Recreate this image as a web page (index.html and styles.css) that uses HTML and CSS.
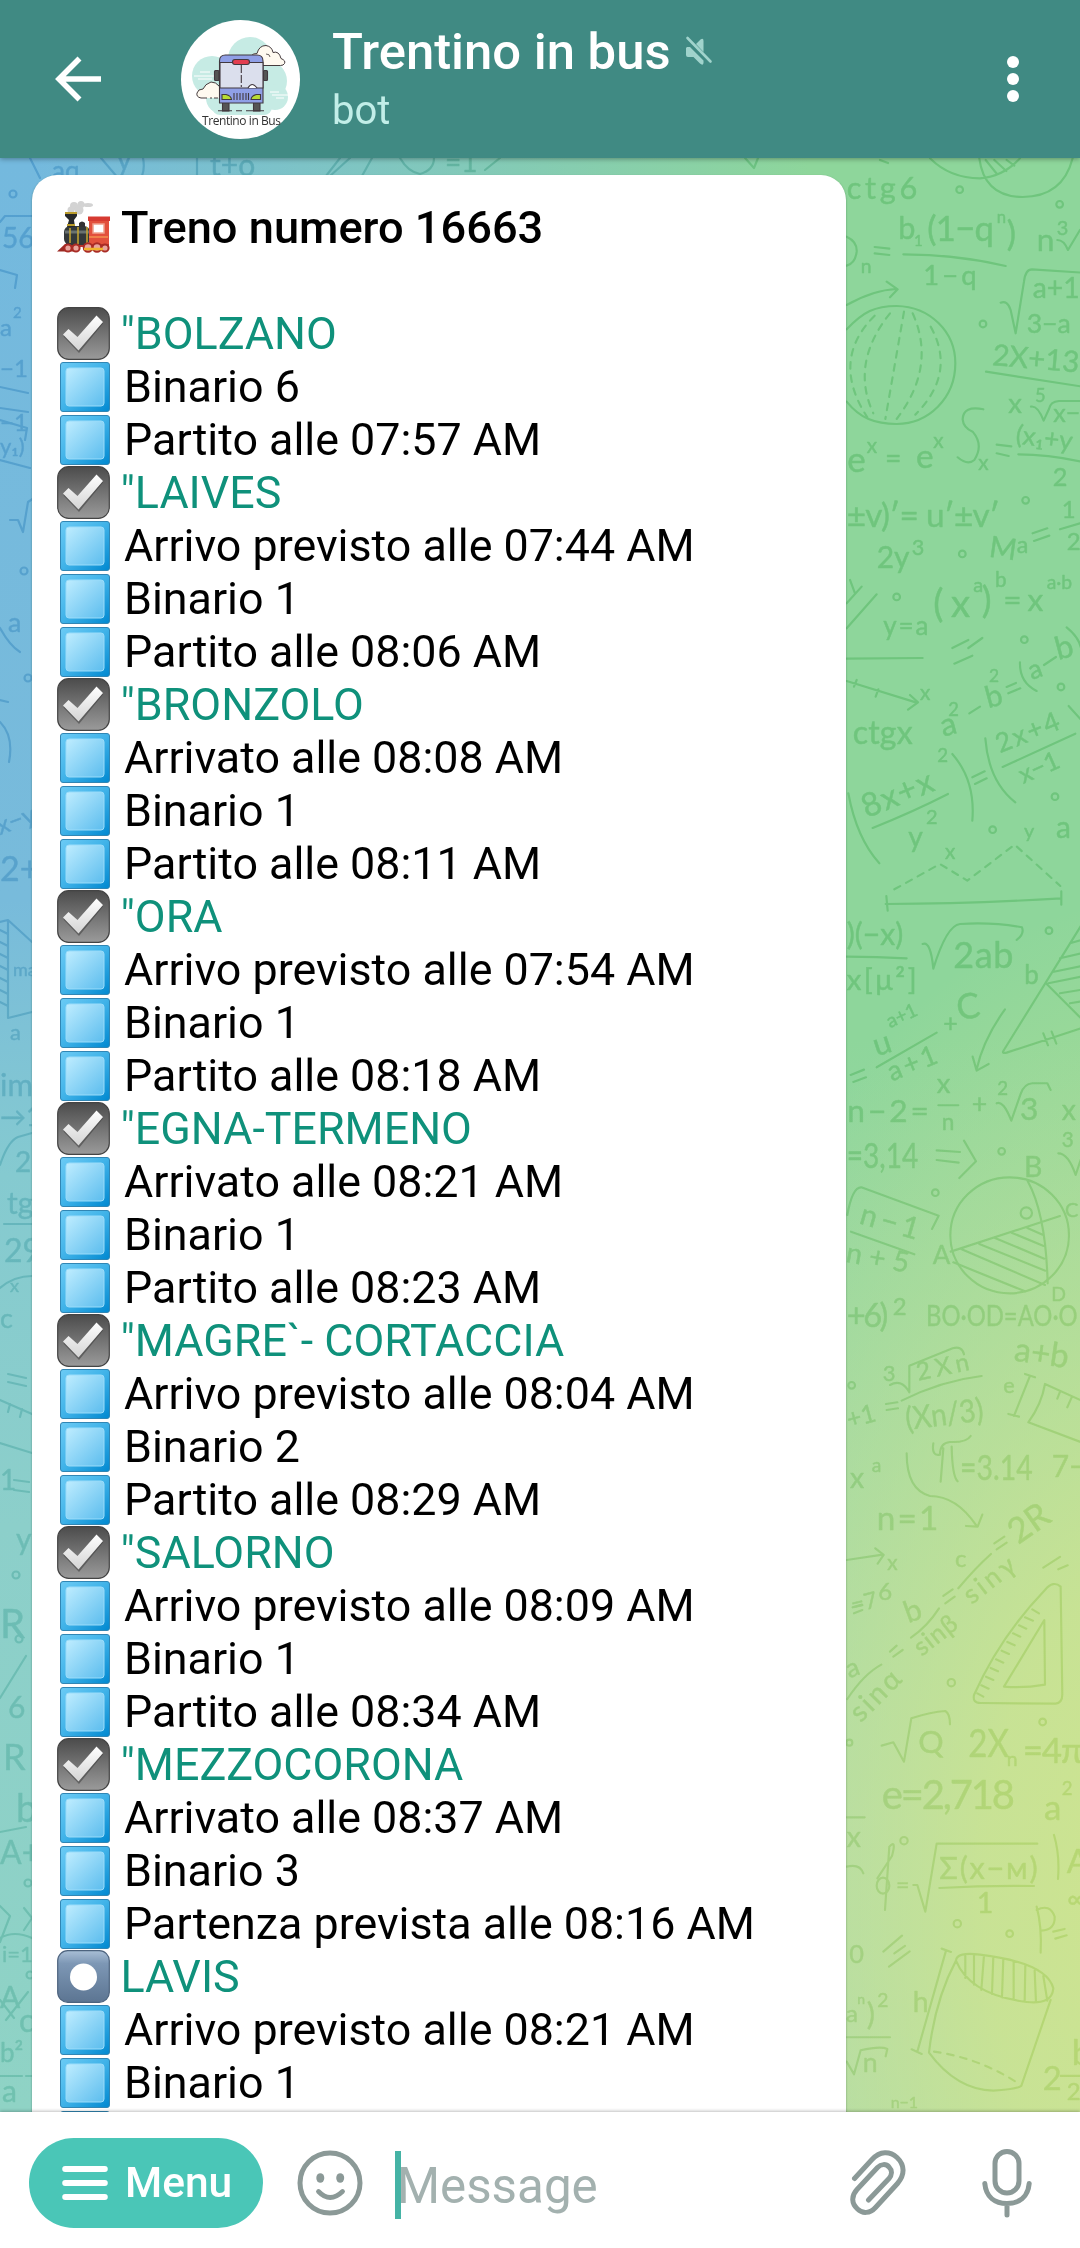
FILE: index.html
```html
<!DOCTYPE html>
<html lang="it">
<head>
<meta charset="utf-8">
<title>Trentino in bus</title>
<link rel="stylesheet" href="styles.css">
</head>
<body>
<svg class="defs" width="0" height="0" aria-hidden="true">
  <defs>
    <linearGradient id="gDark" x1="0" y1="0" x2="0" y2="1"><stop offset="0" stop-color="#4c4c4c"/><stop offset="1" stop-color="#9a9a9a"/></linearGradient>
    <linearGradient id="gTick" x1="0" y1="0" x2="0" y2="1"><stop offset="0" stop-color="#fff"/><stop offset="1" stop-color="#d4d4d4"/></linearGradient>
    <linearGradient id="gBlue" x1="0" y1="0" x2="1" y2="1"><stop offset="0" stop-color="#6ccbf5"/><stop offset=".5" stop-color="#3fb2e8"/><stop offset="1" stop-color="#0088d0"/></linearGradient>
    <linearGradient id="gLight" x1="0" y1="0" x2="1" y2="1"><stop offset="0" stop-color="#bfedff"/><stop offset="1" stop-color="#5cbdee"/></linearGradient>
    <linearGradient id="gSteel" x1="0" y1="0" x2="0" y2="1"><stop offset="0" stop-color="#a9bfd6"/><stop offset=".25" stop-color="#7d97b5"/><stop offset="1" stop-color="#5c7592"/></linearGradient>
    <symbol id="tick" viewBox="0 0 53 53">
      <rect x=".7" y=".7" width="51.6" height="51.6" rx="11" fill="url(#gDark)" stroke="#444" stroke-width="1.2"/>
      <path d="M6.500 28 12 21.500 20.500 29.500 39 8.500 46 15 22 44.500Z" fill="#333" opacity=".5" transform="translate(0 1.500)"/>
      <path d="M6 27.500 11.500 22 20.500 30 39.500 8.500 46 15 21.500 43.500Z" fill="url(#gTick)"/>
    </symbol>
    <symbol id="square" viewBox="0 0 53 53">
      <rect x="3.500" y="2.500" width="49" height="49" rx="2.500" fill="url(#gBlue)" stroke="#3186b4" stroke-width="1"/>
      <rect x="9" y="8" width="38" height="38" rx="3" fill="url(#gLight)" stroke="#9adcfa" stroke-width="1"/>
    </symbol>
    <symbol id="record" viewBox="0 0 53 53">
      <rect x=".7" y=".7" width="51.6" height="51.6" rx="10" fill="url(#gSteel)" stroke="#4d637e" stroke-width="1.200"/>
      <circle cx="26.500" cy="27" r="13.500" fill="#fff"/>
    </symbol>
    <symbol id="train" viewBox="0 0 53 53">
      <g fill="#d3d3d3"><circle cx="17" cy="5" r="4"/><circle cx="24" cy="3.500" r="3.500"/><circle cx="14" cy="9" r="3.500"/><circle cx="22" cy="9" r="4.500"/><ellipse cx="31" cy="4" rx="5" ry="2"/></g>
      <path d="M8 43 0 50.500H20V43Z" fill="#9c2a24"/>
      <path d="M19 42H52V46H19Z" fill="#b9352b"/>
      <rect x="7" y="25" width="26" height="19" rx="6" fill="#33383a"/>
      <path d="M8 31h24" stroke="#69716f" stroke-width="3"/>
      <path d="M8 11H20V15L17 19 18 26H10L12 19 8 15Z" fill="#26282a"/>
      <path d="M8 12h12M10 24h8" stroke="#b99b2b" stroke-width="1.800"/>
      <path d="M22 26v-4q3-3 6 0v4Z" fill="#343234"/>
      <path d="M13 27v15M21 26v17M30 26v17" stroke="#c9a72f" stroke-width="1.500"/>
      <path d="M32 18H52V43H32Z" fill="#e2503c"/>
      <path d="M31 15.500H53V20H31Z" fill="#d63a31"/>
      <rect x="36" y="23" width="11" height="9" fill="#fff" stroke="#f0a08c" stroke-width="1.500"/>
      <path d="M32 36H51" stroke="#f5924e" stroke-width="1.500"/>
      <g fill="#e8a49c" stroke="#a92b25" stroke-width="2"><circle cx="11" cy="47" r="3.600"/><circle cx="19" cy="47" r="3.600"/><circle cx="31" cy="46.500" r="4.300"/><circle cx="40" cy="46.500" r="4.300"/><circle cx="48" cy="47" r="3.600"/></g>
      <path d="M27 48H46" stroke="#f0b52e" stroke-width="2.500"/>
    </symbol>
  </defs>
</svg>

<div class="app">
  <header class="topbar">
    <svg class="back" viewBox="0 0 48 48" width="48" height="48"><path d="M47 24H6M25.500 3.500 5 24 25.500 44.500" fill="none" stroke="#fff" stroke-width="5.600"/></svg>
    <svg class="avatar" viewBox="181 19 119 119" width="119" height="119">
      <circle cx="240.500" cy="78.500" r="59.500" fill="#fff"/>
      <g fill="#c6ebe4"><circle cx="250" cy="58" r="22"/><circle cx="212" cy="75" r="20"/><circle cx="266" cy="80" r="21"/><circle cx="222" cy="97" r="16"/><circle cx="275" cy="96" r="13"/><rect x="212" y="60" width="60" height="54" rx="8"/></g>
      <path d="M194 75h22M200 71h10M198 78h14M272 94h16M270 91h9M276 97h8" stroke="#fff" stroke-width="1"/>
      <path d="M252 64.500q-4-3-2-8 3-5 7-4 2-8 9-8 6 1 7 7 6-2 8 6 5 2 3.500 5-1 2-4 2Z" fill="#fffaf0" stroke="#463c3e" stroke-width="1"/>
      <path d="M266 53q4 0 4 3" fill="none" stroke="#463c3e" stroke-width=".8"/>
      <path d="M219 97H201q-5-1-4-5 1-4 6-4 2-5 8-7 5 0 8 5Z" fill="#fffaf0"/>
      <path d="M207 97H201q-5-1-4-5 1-4 6-4 2-5 8-7 5 0 8 4M210 97h2M214 97h4" fill="none" stroke="#463c3e" stroke-width="1"/>
      <g stroke="#41383f" stroke-width="1.100">
        <rect x="214.500" y="69.500" width="4.500" height="10" rx="1" fill="#555"/><rect x="263.500" y="69.500" width="4" height="10" rx="1" fill="#555"/>
        <rect x="222.500" y="101" width="6.500" height="9" fill="#555"/><rect x="253.500" y="101" width="6.500" height="9" fill="#555"/>
        <path d="M219.500 102V60q0-6 6-6H257q6 0 6 6V102Z" fill="#8f9fe6"/>
        <path d="M220 61.500h43V87H220Z" fill="#dbdfed"/>
        <path d="M241.300 64v22" stroke-dasharray="8 2"/>
        <path d="M248 87q4-7 9 0" fill="#fff"/>
        <rect x="232.500" y="58.500" width="17" height="5" rx="2.500" fill="#e23e50"/>
        <path d="M222 93.500h4q5 1 5.500 5H222ZM260.500 93.500h-4q-5 1-5.500 5h9.500Z" fill="#b8dc35"/>
        <path d="M234 92v7M237 92v7M240 92v7M243 92v7M246 92v7M248.500 92v7"/>
        <path d="M218 109.800h14M236 109.800h6M246 109.800h18"/>
      </g>
      <text class="logo-text" x="202" y="123.700" textLength="79">Trentino in Bus</text>
    </svg>
    <div class="who">
      <div class="name-row">
        <h1 class="name">Trentino in bus</h1>
        <svg class="mute" viewBox="0 0 28 30" width="28" height="30"><path d="M11 8 15.500 3.500Q18.500 1.500 18.500 5V16ZM2 11H5L18.500 24.500V27Q18 30 15 27.500L8.500 21H3Q1 21 1 19V12Z" fill="#a0d3cc"/><path d="m2.500 2 23 23.500" stroke="#a0d3cc" stroke-width="2.600" stroke-linecap="round"/></svg>
      </div>
      <p class="status">bot</p>
    </div>
    <svg class="more" viewBox="0 0 12 48" width="12" height="48" fill="#fff"><circle cx="6" cy="7" r="6"/><circle cx="6" cy="24" r="6"/><circle cx="6" cy="41" r="6"/></svg>
  </header>

  <main class="chat">
    <svg class="doodles" viewBox="0 158 1080 1954" width="1080" height="1954" aria-hidden="true">
      <!-- upper edge -->
      <g class="ink page">
        <path d="M30 158 40 178M101 158 118 178M143 158q2 10-1 18M197 158v18M340 158l-14 18M330 176l20-18M362 176l10-18M400 158q8 14 20 16 14-4 14-16M500 158 485 170M745 158l9 10 4-10M880 160l8 3"/>
        <text x="52" y="180" font-size="26">aq.</text><text x="117" y="170" font-size="28">y</text><text x="210" y="176" font-size="30">t+o</text><text x="445" y="172" font-size="28">=1</text>
      </g>
      <g class="ink" transform="translate(840 140) scale(.3333)">
        <text x="20" y="178" font-size="92" textLength="212">ctg6</text>
        <path d="M20 290q32 15 30 45-4 35-30 42M104 321l44 5M104 340l44 5M190 343q160 0 307 35M20 495q80-45 150-48M140 425l33 23-23 24M270 55q60 60 150 60 70-5 120-60M418 55q15 115 130 116 120 0 150-116M437 60l34 42M463 60l36 33M500 60l23 17M482 488q20-8 30 22l15 70 25-155q4-37 24-37l150 10M438 695l290 45M430 808q-60-12-62 30 2 25 30 37 34 40 5 85-20 18-50-8M470 914l44 5M470 940l36 8M535 943q90 0 190 22M573 800q20-4 38 42l16-35q4-22 30-24h70"/>
        <text x="62" y="400" font-size="58">n</text><text x="175" y="297" font-size="92">b</text><text x="222" y="318" font-size="45">1</text><text x="262" y="302" font-size="104" textLength="200">(1−q</text><text x="470" y="250" font-size="50">n</text><text x="500" y="318" font-size="104">)</text><text x="590" y="333" font-size="95">n</text><text x="650" y="285" font-size="60">3</text><path d="M652 300q20 0 32 30l36-60"/><text x="250" y="435" font-size="82" textLength="160">1−q</text><text x="578" y="475" font-size="85">a+1</text><text x="560" y="578" font-size="80">3−a</text>
        <path d="M20 568C70 515 105 498 170 498 270 500 346 575 346 670 346 775 265 852 170 852 105 852 60 835 20 785"/>
        <path class="dash" d="M104 527Q-30 660 82 832M150 520Q30 670 100 820M192 515 136 837M218 520Q290 680 170 837M272 560Q350 700 226 824"/>
        <text x="455" y="675" font-size="88" transform="rotate(5 455 675)">2X+13</text><text x="505" y="820" font-size="82">x</text><text x="585" y="785" font-size="55">5</text><text x="640" y="845" font-size="75">x−</text><text x="525" y="910" font-size="78" transform="rotate(7 525 910)">(x₁+y</text><text x="415" y="990" font-size="62">x</text><text x="638" y="1037" font-size="76">2</text>
        <text x="22" y="995" font-size="105">e</text><text x="80" y="940" font-size="62">x</text><text x="135" y="985" font-size="85">=</text><text x="228" y="983" font-size="100">e</text><text x="280" y="925" font-size="62">x</text>
        <text x="20" y="1160" font-size="100" textLength="460">±v)′= u′±v′</text><text x="110" y="1285" font-size="90">2y</text><text x="215" y="1245" font-size="65">3</text><text x="445" y="1250" font-size="88" transform="rotate(8 445 1250)">M</text><text x="530" y="1240" font-size="70">a</text><path d="M578 1180l44-15M582 1203l46-16M660 1168l60-18"/><text x="665" y="1135" font-size="72">1</text><text x="680" y="1230" font-size="72">2</text>
        <text x="280" y="1430" font-size="115" textLength="110">(x</text><text x="400" y="1355" font-size="60">a</text><text x="425" y="1420" font-size="110">)</text><text x="465" y="1340" font-size="62">b</text><text x="490" y="1412" font-size="95" textLength="120">=x</text><text x="620" y="1348" font-size="58">a·b</text><text x="130" y="1485" font-size="78" textLength="135">y=a</text>
        <path d="M20 1465l90-102M20 1390l45-50M30 1320l15 40"/>
        <g><circle cx="359" cy="149" r="10"/><circle cx="659" cy="193" r="10"/><circle cx="429" cy="552" r="10"/><circle cx="557" cy="1081" r="10"/><circle cx="367" cy="1242" r="10"/><circle cx="170" cy="1371" r="10"/></g>
      </g>
      <g class="ink" transform="translate(840 620) scale(.3333)">
        <path d="M20 116l228-2M20 183l210 65M210 225l24 22-30 22M50 180l-8 20M115 208l-8 22M337 84l48-24M385 84l42-30M343 131l54-24M98 624q120-48 226-102M25 520q25 135 93 210M337 402q70 80 60 200M397 472l37-18M405 492l35-17M488 441l218-100M436 355q10 130 90 192M137 852q250 0 527-17M139 828l4 44M664 814v40M540 127q-2 60 50 86M500 201l28-12M505 220l36-15M612 135l36-24M388 280l32-20M680 22q50 40 45 90M686 258l36 40"/>
        <path class="dash" d="M163 808l137-76 82 50 142-108 137 124"/>
        <text x="240" y="240" font-size="62">x</text><text x="38" y="373" font-size="96" textLength="180">ctgx</text><text x="310" y="350" font-size="95" transform="rotate(-15 310 350)">a</text><text x="325" y="288" font-size="55">2</text><text x="445" y="265" font-size="90" transform="rotate(-15 445 265)">b</text><text x="447" y="186" font-size="52">2</text><text x="575" y="180" font-size="80" transform="rotate(-20 575 180)">a</text><text x="655" y="120" font-size="95" transform="rotate(-15 655 120)">b</text>
        <text x="80" y="595" font-size="98" transform="rotate(-22 80 595)" textLength="225">8x+x</text><text x="292" y="425" font-size="56">2</text><text x="205" y="680" font-size="85">y</text><text x="258" y="612" font-size="60">2</text><text x="480" y="400" font-size="80" transform="rotate(-22 480 400)" textLength="200">2x+4</text><text x="550" y="492" font-size="76" transform="rotate(-24 550 492)">x−1</text><text x="315" y="716" font-size="62">x</text><text x="552" y="655" font-size="60">y</text><text x="648" y="655" font-size="90">a</text>
        <text x="20" y="975" font-size="90" textLength="170">)(−x)</text><path d="M20 1010q90 0 180 5M248 972q24-10 32 74 40-130 80-134 100-6 186 10 8 20-16 38"/><text x="20" y="1110" font-size="88" textLength="210">x[μ²]</text><text x="340" y="1045" font-size="108" textLength="180">2ab</text><text x="553" y="1092" font-size="78">b</text>
        <path d="M740 890 490 1293q-5 8 10 5l230-75M618 1090l110 110M690 970l40-12M660 1015l65-15M638 1056l88-18M625 1090l100-20M660 1120l60-10M690 1150l35-6M610 1240l14 36M635 1235l14 36M110 1342l180-104M495 1168q-65 90-85 180M398 1310l12 42 36-20M32 1365l40-16M40 1386l38-14"/>
        <text x="110" y="1310" font-size="95" transform="rotate(-18 110 1310)">u</text><text x="150" y="1225" font-size="58" transform="rotate(-25 150 1225)">a+1</text><text x="310" y="1235" font-size="75">+</text><text x="355" y="1200" font-size="105" transform="rotate(-8 355 1200)">C</text><text x="155" y="1385" font-size="82" transform="rotate(-22 155 1385)" textLength="155">a+1</text><text x="290" y="1420" font-size="82">x</text><text x="22" y="1505" font-size="95" textLength="245">n−2=</text><path d="M295 1456h60M470 1450q20-10 44 52l28-80q10-30 35-32h45l10 20"/><text x="395" y="1480" font-size="80">+</text><text x="472" y="1425" font-size="56">2</text><text x="540" y="1500" font-size="95">3</text><text x="665" y="1500" font-size="85">x</text>
        <g><circle cx="553" cy="59" r="10"/><circle cx="663" cy="201" r="10"/><circle cx="645" cy="530" r="10"/><circle cx="458" cy="629" r="10"/><circle cx="627" cy="932" r="10"/></g>
      </g>
      <g class="ink" transform="translate(840 1100) scale(.3333)">
        <text x="305" y="90" font-size="68">n</text><text x="20" y="205" font-size="104" textLength="215" lengthAdjust="spacingAndGlyphs">=3,14</text><path d="M290 151l70 5M290 180l66 8M372 122l36 62-50 50M22 345q15-85 42-83l232 85-20 40M33 395l190 68M655 160q30 0 52 65l20-60"/><text x="665" y="142" font-size="62">3</text><text x="55" y="370" font-size="90" transform="rotate(16 55 370)" textLength="180">n−1</text><text x="15" y="485" font-size="85" transform="rotate(10 15 485)" textLength="190">n+5</text>
        <ellipse cx="509" cy="406" rx="178" ry="174"/><path d="M332 455l328-107M563 243q55 100 60 307M340 487l215 87M365 448l250 107M418 432l198 80M465 414l148 62M515 398l96 40M562 384l46 20"/><circle cx="559" cy="339" r="17"/><text x="552" y="232" font-size="85">B</text><text x="278" y="492" font-size="78">A</text><text x="675" y="350" font-size="60">C</text><text x="634" y="604" font-size="58">D</text>
        <text x="20" y="680" font-size="98" textLength="125">+6)</text><text x="158" y="645" font-size="72">2</text><text x="258" y="678" font-size="88" textLength="455" lengthAdjust="spacingAndGlyphs">BO·OD=AO·O</text><text x="520" y="782" font-size="100" transform="rotate(8 520 782)">a+b</text>
        <text x="128" y="842" font-size="66">3</text><path d="M150 855q35-20 58 22V797l130-52q28-8 34 18M185 902q120-60 240-74M138 912l34-5M140 930l34-5M555 822l30 10M570 828 522 948M505 942l32 8M615 852q-10 60-50 115l165 62M615 852l110 50M660 876l-8 20M696 890l-14 32M200 1060q0 110 70 128 80 0 140 90M378 1278l35 2 14-36M20 1380l108-16M106 1345l25 20-18 26M355 1465q50-60 98-103M463 1330l30-20M470 1348l30-20M610 1403l50-32M655 1408l28-12M310 1488l28-20M316 1510l28-20M280 1030q-6 40 20 34 0-36 30-38 50 2 62-18M310 1045l-8 100M335 1040q2 90 18 104"/>
        <text x="235" y="842" font-size="74" transform="rotate(-12 235 842)" textLength="160">2Xn</text><text x="28" y="985" font-size="75" transform="rotate(-15 28 985)">+1</text><text x="200" y="990" font-size="95" transform="rotate(-7 200 990)" textLength="235" lengthAdjust="spacingAndGlyphs">(Xn/3)</text><text x="490" y="880" font-size="65">e</text><text x="360" y="1140" font-size="105" textLength="218" lengthAdjust="spacingAndGlyphs">=3.14</text><text x="635" y="1130" font-size="90">7−</text><text x="30" y="1165" font-size="85">x</text><text x="95" y="1115" font-size="58">a</text><text x="110" y="1290" font-size="100" textLength="185">n=1</text><text x="142" y="1410" font-size="62">x</text><text x="345" y="1400" font-size="72">c</text><text x="395" y="1515" font-size="80" transform="rotate(-38 395 1515)" textLength="175">sinγ</text><text x="535" y="1335" font-size="105" transform="rotate(-35 535 1335)">2R</text><text x="40" y="1540" font-size="68" transform="rotate(-14 40 1540)">=7</text><text x="115" y="1500" font-size="72">6</text>
        <g><circle cx="485" cy="154" r="10"/><circle cx="286" cy="278" r="10"/><circle cx="35" cy="856" r="10"/></g>
      </g>
      <g class="ink" transform="translate(840 1600) scale(.3333)">
        <path d="M615-30Q480 110 402 285q-5 24 20 24l225 2q20-2 20-28L662-40Q640-60 615-30M613 60 492 260q60 5 123-6ZM577 28l20 12M555 52l24 10M537 76l22 10M519 100l22 10M502 126l22 10M485 152l22 10M468 178l22 10M452 204l22 10M438 230l22 10M424 256l22 10M412 280l18 10"/>
        <path d="M22 297q50-75 102-103M213 113q50-35 84-88M150 155l20-18M160 170l28-20M38 22l28-8M42 40l25-10M125 437l35-10 32 58 22-130q60-20 102-22 14 8 14 40M20 652h54M20 800q40-10 50 20M220 855l12 0 24 80 34-204h302M298 864q140-8 284-6M130 1055l56-48M163 1060l32-22M147 1100l62-46M305 1046l28 10M318 1052 232 1355M215 1348l30 14M20 1312h130M20 1385l22 38 20-72q60-14 80-4l-5 22M642 705q18 60 12 132M662 1428h60M640 995l34-8M646 1016l34-10"/>
        <path d="M590 920q16 60 12 138M590 930q40-20 54 20 2 40-40 42"/>
        <text x="28" y="235" font-size="78" transform="rotate(-20 28 235)">a</text><text x="62" y="370" font-size="85" transform="rotate(-45 62 370)" textLength="180">sinα</text><text x="205" y="70" font-size="90" transform="rotate(-20 205 70)">b</text><text x="245" y="170" font-size="76" transform="rotate(-38 245 170)" textLength="145">sinβ</text>
        <text x="235" y="458" font-size="95">Q</text><text x="385" y="472" font-size="115" textLength="122" lengthAdjust="spacingAndGlyphs">2X</text><text x="500" y="497" font-size="58">n</text><text x="548" y="490" font-size="105" textLength="180">=4π</text><text x="125" y="628" font-size="120" textLength="400">e=2,718</text><text x="612" y="660" font-size="105">a</text><text x="665" y="585" font-size="56">2</text><text x="20" y="742" font-size="85">x</text>
        <path d="M135 930 148 740q22-24 8 28L112 835"/><ellipse cx="129" cy="857" rx="19" ry="24"/><text x="168" y="880" font-size="70">=</text><text x="298" y="836" font-size="92" textLength="295">Σ(x−м)</text><text x="410" y="940" font-size="86">1</text><text x="680" y="820" font-size="100">A</text><text x="682" y="925" font-size="80">∞</text><text x="28" y="1088" font-size="76">0</text><text x="18" y="1265" font-size="72">a</text><text x="80" y="1275" font-size="92">)</text><text x="52" y="1212" font-size="42">n</text><text x="112" y="1222" font-size="58">2</text><text x="68" y="1415" font-size="80">n</text><text x="218" y="1235" font-size="85">h</text>
        <path d="M348 1082Q350 1055 420 1064 620 1088 640 1165 636 1215 560 1206 390 1185 348 1082Q285 1200 267 1358 350 1470 460 1472 530 1468 544 1458L632 1200M376 1068v66M402 1066v88M432 1066l-8 104M460 1070l-4 112M490 1076l-4 116M521 1084v114M556 1098l-2 106M584 1112l4 94M610 1128l12 74"/><path class="dash" d="M282 1355q130 18 245 90"/>
        <text x="608" y="1470" font-size="98">2</text><text x="695" y="1395" font-size="105">b</text><text x="680" y="1500" font-size="72">2</text><text x="152" y="1525" font-size="48">n−1</text>
        <g><circle cx="334" cy="248" r="11"/><circle cx="608" cy="366" r="10"/><circle cx="28" cy="428" r="9"/><circle cx="192" cy="722" r="11"/><circle cx="352" cy="971" r="11"/><circle cx="509" cy="1001" r="10"/></g>
      </g>
      <!-- left edge -->
      <g class="ink page">
        <path d="M0 222l5-6h30M0 270l17 5-2 13M0 387l28 6M0 408l28 4M0 420l27 8-2 12M0 460l30 8M10 520l8 0 5 12 5-30 6-4M0 628q10 18 20 24M0 700l8 2M0 722q14 14 9 40M0 922l8-2 24 22M8 920v98l24-6M0 930l8 4M0 942l8 4M0 954l8 4M0 966l8 4M0 978l8 4M0 990l8 4M0 1002l8 4M0 1165q8-24 18-28l14-4M4 1224h28M0 1288q14-12 32-12M0 1400l32 14M10 1404l-2 8M22 1409l-2 8M0 1443l32 10M8 1374l18 4M8 1382l18 4M14 1480l15 2M14 1490l15 2M0 1698l26-42M0 1832l26-5M0 1906l10 10-10 26M24 1908l8 10-8 12M0 1938q14-8 32 0M0 2076h22M26 2076h8M0 2000l14 18M6 2020l22-28"/>
        <text x="2" y="248" font-size="28">56</text><text x="0" y="336" font-size="24">a</text><text x="13" y="318" font-size="15">2</text><text x="0" y="377" font-size="24">−1</text><text x="0" y="431" font-size="24">−1</text><text x="0" y="454" font-size="22">y₁)</text><text x="8" y="632" font-size="27">a</text><text x="0" y="835" font-size="25" transform="rotate(-20 0 835)">x−y</text><text x="0" y="881" font-size="34">2+</text><text x="13" y="976" font-size="18">ma</text><text x="10" y="1040" font-size="22">a</text><text x="0" y="1096" font-size="31">im</text><text x="0" y="1126" font-size="26">→1</text><text x="15" y="1172" font-size="28">2</text><text x="7" y="1214" font-size="30">tg</text><text x="4" y="1262" font-size="32">29</text><text x="10" y="1292" font-size="18">x</text><text x="0" y="1328" font-size="27">c</text><text x="0" y="1490" font-size="28">1</text><text x="16" y="1550" font-size="30">y</text><text x="0" y="1638" font-size="40">R</text><text x="8" y="1718" font-size="30">6</text><text x="3" y="1770" font-size="36">R</text><text x="16" y="1822" font-size="38">b</text><text x="0" y="1864" font-size="32">A+</text><text x="2" y="1962" font-size="22">i=1</text><text x="0" y="2008" font-size="30">A</text><text x="19" y="2032" font-size="32">c</text><text x="0" y="2062" font-size="26">b²</text><text x="2" y="2102" font-size="30">a</text>
        <circle cx="13" cy="194" r="3.500"/><circle cx="24" cy="571" r="3.500"/><circle cx="28" cy="678" r="3.500"/><circle cx="16" cy="1575" r="3.500"/><circle cx="19" cy="1639" r="3.500"/><circle cx="28" cy="1883" r="3.500"/><circle cx="30" cy="1975" r="3.500"/>
      </g>
    </svg>

    <article class="bubble">
      <div class="row title"><svg class="emo"><use href="#train"/></svg><span>Treno numero 16663</span></div>
      <div class="row"></div>
      <div class="row stop"><svg class="emo"><use href="#tick"/></svg><span>"BOLZANO</span></div>
      <div class="row"><svg class="emo"><use href="#square"/></svg><span>Binario 6</span></div>
      <div class="row"><svg class="emo"><use href="#square"/></svg><span>Partito alle 07:57 AM</span></div>
      <div class="row stop"><svg class="emo"><use href="#tick"/></svg><span>"LAIVES</span></div>
      <div class="row"><svg class="emo"><use href="#square"/></svg><span>Arrivo previsto alle 07:44 AM</span></div>
      <div class="row"><svg class="emo"><use href="#square"/></svg><span>Binario 1</span></div>
      <div class="row"><svg class="emo"><use href="#square"/></svg><span>Partito alle 08:06 AM</span></div>
      <div class="row stop"><svg class="emo"><use href="#tick"/></svg><span>"BRONZOLO</span></div>
      <div class="row"><svg class="emo"><use href="#square"/></svg><span>Arrivato alle 08:08 AM</span></div>
      <div class="row"><svg class="emo"><use href="#square"/></svg><span>Binario 1</span></div>
      <div class="row"><svg class="emo"><use href="#square"/></svg><span>Partito alle 08:11 AM</span></div>
      <div class="row stop"><svg class="emo"><use href="#tick"/></svg><span>"ORA</span></div>
      <div class="row"><svg class="emo"><use href="#square"/></svg><span>Arrivo previsto alle 07:54 AM</span></div>
      <div class="row"><svg class="emo"><use href="#square"/></svg><span>Binario 1</span></div>
      <div class="row"><svg class="emo"><use href="#square"/></svg><span>Partito alle 08:18 AM</span></div>
      <div class="row stop"><svg class="emo"><use href="#tick"/></svg><span>"EGNA-TERMENO</span></div>
      <div class="row"><svg class="emo"><use href="#square"/></svg><span>Arrivato alle 08:21 AM</span></div>
      <div class="row"><svg class="emo"><use href="#square"/></svg><span>Binario 1</span></div>
      <div class="row"><svg class="emo"><use href="#square"/></svg><span>Partito alle 08:23 AM</span></div>
      <div class="row stop"><svg class="emo"><use href="#tick"/></svg><span>"MAGRE`- CORTACCIA</span></div>
      <div class="row"><svg class="emo"><use href="#square"/></svg><span>Arrivo previsto alle 08:04 AM</span></div>
      <div class="row"><svg class="emo"><use href="#square"/></svg><span>Binario 2</span></div>
      <div class="row"><svg class="emo"><use href="#square"/></svg><span>Partito alle 08:29 AM</span></div>
      <div class="row stop"><svg class="emo"><use href="#tick"/></svg><span>"SALORNO</span></div>
      <div class="row"><svg class="emo"><use href="#square"/></svg><span>Arrivo previsto alle 08:09 AM</span></div>
      <div class="row"><svg class="emo"><use href="#square"/></svg><span>Binario 1</span></div>
      <div class="row"><svg class="emo"><use href="#square"/></svg><span>Partito alle 08:34 AM</span></div>
      <div class="row stop"><svg class="emo"><use href="#tick"/></svg><span>"MEZZOCORONA</span></div>
      <div class="row"><svg class="emo"><use href="#square"/></svg><span>Arrivato alle 08:37 AM</span></div>
      <div class="row"><svg class="emo"><use href="#square"/></svg><span>Binario 3</span></div>
      <div class="row"><svg class="emo"><use href="#square"/></svg><span>Partenza prevista alle 08:16 AM</span></div>
      <div class="row stop"><svg class="emo"><use href="#record"/></svg><span>LAVIS</span></div>
      <div class="row"><svg class="emo"><use href="#square"/></svg><span>Arrivo previsto alle 08:21 AM</span></div>
      <div class="row"><svg class="emo"><use href="#square"/></svg><span>Binario 1</span></div>
      <div class="row"><svg class="emo"><use href="#square"/></svg></div>
    </article>
  </main>

  <footer class="composer">
    <div class="menu">
      <svg viewBox="0 0 46 36" width="46" height="36"><path d="M3.200 4H42.800M3.200 18H42.800M3.200 32H42.800" stroke="#fff" stroke-width="6" stroke-linecap="round"/></svg>
      <span>Menu</span>
    </div>
    <svg class="smile" viewBox="0 0 66 66" width="66" height="66"><circle cx="33" cy="33" r="30" fill="none" stroke="#8b9997" stroke-width="5"/><ellipse cx="23.300" cy="28" rx="4" ry="4.800" fill="#8b9997"/><ellipse cx="43.200" cy="28" rx="4" ry="4.800" fill="#8b9997"/><path d="M21.500 41.500Q33 53.500 45.500 41.500" fill="none" stroke="#8b9997" stroke-width="4.800" stroke-linecap="round"/></svg>
    <div class="field"><i class="caret"></i><span>Message</span></div>
    <svg class="clip" viewBox="0 0 56 66" width="56" height="66" fill="none" stroke="#8b9997" stroke-width="5" stroke-linecap="round"><path d="M4.500 28.500 22 9.500C30 .5 40 1 47 7.500 55 15 55 25 47.500 33.500L25.500 57.500C20 63.500 12.500 64 7.500 59 1.500 53.500 1 46 7 39.500L27.500 17.500C31 14 36 13.500 39 17 42.500 20.500 42 25 39 28.500L18.500 50"/></svg>
    <svg class="mic" viewBox="0 0 50 70" width="50" height="70" fill="none" stroke="#8b9997" stroke-width="5"><rect x="13" y="3.500" width="24" height="41.500" rx="12"/><path d="M2.800 35.500C4 49 13 55.500 25 55.500S46 49 47.200 35.500M25 55.500V67" stroke-linecap="round"/></svg>
  </footer>
</div>
</body>
</html>
```
FILE: styles.css
```css
* { box-sizing: border-box; margin: 0; padding: 0; }

body {
  width: 1080px;
  height: 2248px;
  overflow: hidden;
  background: #fff;
  font-family: Roboto, "Noto Sans", sans-serif;
}

svg { display: block; flex: none; }
.defs { position: absolute; }

.app {
  display: flex;
  flex-direction: column;
  height: 2248px;
}

/* top bar */
.topbar {
  display: flex;
  align-items: center;
  height: 158px;
  flex: none;
  padding: 0 61px 0 54px;
  background: #408a83;
  box-shadow: 0 1px 5px rgba(0, 0, 0, .35);
  position: relative;
  z-index: 1;
}
.avatar { margin-left: 79px; }
.logo-text { font: 12px "Open Sans", "Noto Sans", sans-serif; fill: #333; }
.who { margin-left: 32px; flex: 1; padding-bottom: 1px; }
.name-row { display: flex; align-items: center; gap: 14px; }
.name { font-size: 50.8px; font-weight: 500; line-height: 60px; color: #fff; white-space: nowrap; }
.mute { margin-top: -2px; }
.status { margin-top: 4px; font-size: 40px; line-height: 50px; color: #c2eee8; }

/* conversation */
.chat {
  position: relative;
  flex: 1;
  min-height: 0;
  overflow: hidden;
  padding: 17px 0 0 32px;
  background:
    radial-gradient(ellipse 520px 1000px at 1150px 1740px, rgba(206, 228, 144, 1) 0%, rgba(206, 228, 144, .85) 32%, rgba(206, 228, 144, 0) 100%),
    linear-gradient(to bottom, rgba(168, 217, 180, 0) 45%, rgba(168, 217, 180, .9) 85%) 800px 0 / 280px 100% no-repeat,
    linear-gradient(to right, rgba(142, 214, 155, 0) 3%, rgba(142, 214, 155, .65) 50%, #8ed69b 75%),
    linear-gradient(to bottom, #74b9de 0%, #78bbdb 38%, #85cad0 52%, #8ccfca 70%, #8fd3c5 100%);
}
.doodles { position: absolute; left: 0; top: 0; mix-blend-mode: soft-light; opacity: .5; }
.ink { fill: none; stroke: #000; stroke-width: 6.5; stroke-linecap: round; stroke-linejoin: round; }
.ink.page { stroke-width: 2.2; }
.ink text { fill: #000; stroke-width: 1.6; font-family: Lato, "DejaVu Sans", sans-serif; }
.ink.page text { stroke-width: .5; }
.dash { stroke-dasharray: 20 20; }

.bubble {
  position: relative;
  width: 814px;
  height: 2100px;
  padding: 26px 25px;
  border-radius: 25px;
  background: #fff;
  box-shadow: 0 1px 2px rgba(40, 80, 60, .55);
}
.row {
  display: flex;
  height: 53px;
  font-size: 44.8px;
  line-height: 54px;
  color: #000;
  white-space: nowrap;
}
.row span { margin-left: 14px; }
.emo { width: 53px; height: 53px; }
.title { font-weight: 500; font-size: 45.2px; }
.title span { margin-left: 11px; }
.stop { color: #0f917b; }
.stop span { margin-left: 10.5px; }

/* composer */
.composer {
  display: flex;
  align-items: center;
  height: 136px;
  flex: none;
  padding: 5px 48px 0 29px;
  background: #fff;
  box-shadow: 0 -1px 3px rgba(0, 0, 0, .25);
  position: relative;
  z-index: 1;
}
.menu {
  display: flex;
  align-items: center;
  width: 234px;
  height: 90px;
  padding-left: 33px;
  gap: 17px;
  border-radius: 45px;
  background: #4ac6b7;
  color: #fff;
  font-size: 42.5px;
  font-weight: 500;
}
.smile { margin-left: 34px; }
.field {
  display: flex;
  align-items: center;
  flex: 1;
  height: 68px;
  margin: 4px 0 0 32px;
  font-size: 49.3px;
  color: #a3b1af;
}
.field span { margin-top: 2px; }
.caret { width: 6px; height: 68px; margin-right: -4px; background: #45b3a5; }
.clip { margin-right: 76px; }
```
